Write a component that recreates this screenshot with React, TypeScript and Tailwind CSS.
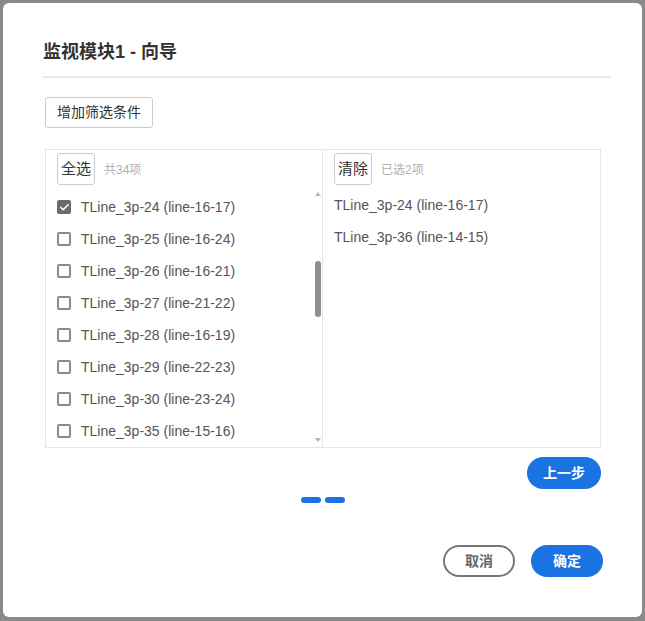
import { Check } from 'lucide-react';

const font = { fontFamily: '"Liberation Sans", "Noto Sans CJK SC", Arial, sans-serif' };

const leftItems = [
    { name: 'TLine_3p-24 (line-16-17)', checked: true },
    { name: 'TLine_3p-25 (line-16-24)', checked: false },
    { name: 'TLine_3p-26 (line-16-21)', checked: false },
    { name: 'TLine_3p-27 (line-21-22)', checked: false },
    { name: 'TLine_3p-28 (line-16-19)', checked: false },
    { name: 'TLine_3p-29 (line-22-23)', checked: false },
    { name: 'TLine_3p-30 (line-23-24)', checked: false },
    { name: 'TLine_3p-35 (line-15-16)', checked: false },
];

const rightItems = ['TLine_3p-24 (line-16-17)', 'TLine_3p-36 (line-14-15)'];

function Checkbox({ checked }: { checked: boolean }) {
    if (checked) {
        return (
            <span className="flex h-[14px] w-[14px] items-center justify-center rounded-[2px] bg-[#6b6b6b]">
                <Check size={11} strokeWidth={3.5} className="text-white" />
            </span>
        );
    }
    return <span className="h-[14px] w-[14px] rounded-[2px] border-2 border-[#8a8a8a] bg-white" />;
}

function PanelHeader({ label, count }: { label: string; count: string }) {
    return (
        <div className="flex h-[39px] items-start gap-[9px] pl-[11px] pt-[3px]">
            <button className="h-[32px] w-[38px] rounded-[3px] border border-[#cccccc] text-[15px] text-[#333]">
                {label}
            </button>
            <span className="mt-[8px] text-[12px] text-[#b0b0b0]">{count}</span>
        </div>
    );
}

function Scrollbar() {
    return (
        <div className="flex w-[9px] flex-col items-center pt-[3px]">
            <span className="h-0 w-0 border-x-[3px] border-b-[4px] border-x-transparent border-b-[#b5b5b5]" />
            <span className="mt-[65px] h-[56px] w-[6px] rounded-full bg-[#8e8e8e]" />
            <span className="mt-[121px] h-0 w-0 border-x-[3px] border-t-[4px] border-x-transparent border-t-[#b5b5b5]" />
        </div>
    );
}

export default function App() {
    return (
        <div className="h-[621px] w-[645px] overflow-hidden bg-[#8a8a8a] pl-[3px] pt-[3px]" style={font}>
            <div className="h-[614px] w-[639px] rounded-[6px] bg-white px-[40px] pt-[37px]">
                <h1 className="text-[18px] font-bold leading-[24px] text-[#333]">监视模块1 - 向导</h1>
                <div className="mt-[12px] h-[2px] w-[568px] bg-[#e8e8e8]" />

                <button className="ml-[2px] mt-[19px] h-[31px] w-[108px] rounded-[3px] border border-[#cccccc] text-[14px] text-[#333]">
                    增加筛选条件
                </button>

                <div className="ml-[2px] mt-[21px] flex h-[299px] w-[556px]">
                    <div className="flex w-[278px] flex-col border border-[#e6e6e6]">
                        <PanelHeader label="全选" count="共34项" />
                        <div className="flex flex-1 overflow-hidden">
                            <ul className="flex-1 pt-[2px]">
                                {leftItems.map((item) => (
                                    <li key={item.name} className="flex h-[32px] items-center gap-[10px] pl-[11px]">
                                        <Checkbox checked={item.checked} />
                                        <span className="text-[14px] text-[#555]">{item.name}</span>
                                    </li>
                                ))}
                            </ul>
                            <Scrollbar />
                        </div>
                    </div>
                    <div className="flex w-[278px] flex-col border border-l-0 border-[#e6e6e6]">
                        <PanelHeader label="清除" count="已选2项" />
                        <ul className="pl-[11px]">
                            {rightItems.map((name) => (
                                <li key={name} className="flex h-[32px] items-center text-[14px] text-[#555]">
                                    {name}
                                </li>
                            ))}
                        </ul>
                    </div>
                </div>

                <div className="ml-[2px] flex w-[556px] flex-col">
                    <button className="mt-[9px] h-[32px] w-[74px] self-end rounded-full bg-[#1a73e0] text-[14px] font-bold text-white">
                        上一步
                    </button>
                    <div className="mt-[8px] flex justify-center gap-[4px]">
                        <span className="h-[6px] w-[20px] rounded-full bg-[#1a73e0]" />
                        <span className="h-[6px] w-[20px] rounded-full bg-[#1a73e0]" />
                    </div>
                </div>

                <div className="mt-[42px] flex w-[560px] justify-end gap-[16px]">
                    <button className="h-[32px] w-[72px] rounded-full border-2 border-[#777] text-[14px] font-bold text-[#666]">
                        取消
                    </button>
                    <button className="h-[32px] w-[72px] rounded-full bg-[#1a73e0] text-[14px] font-bold text-white">
                        确定
                    </button>
                </div>
            </div>
        </div>
    );
}
